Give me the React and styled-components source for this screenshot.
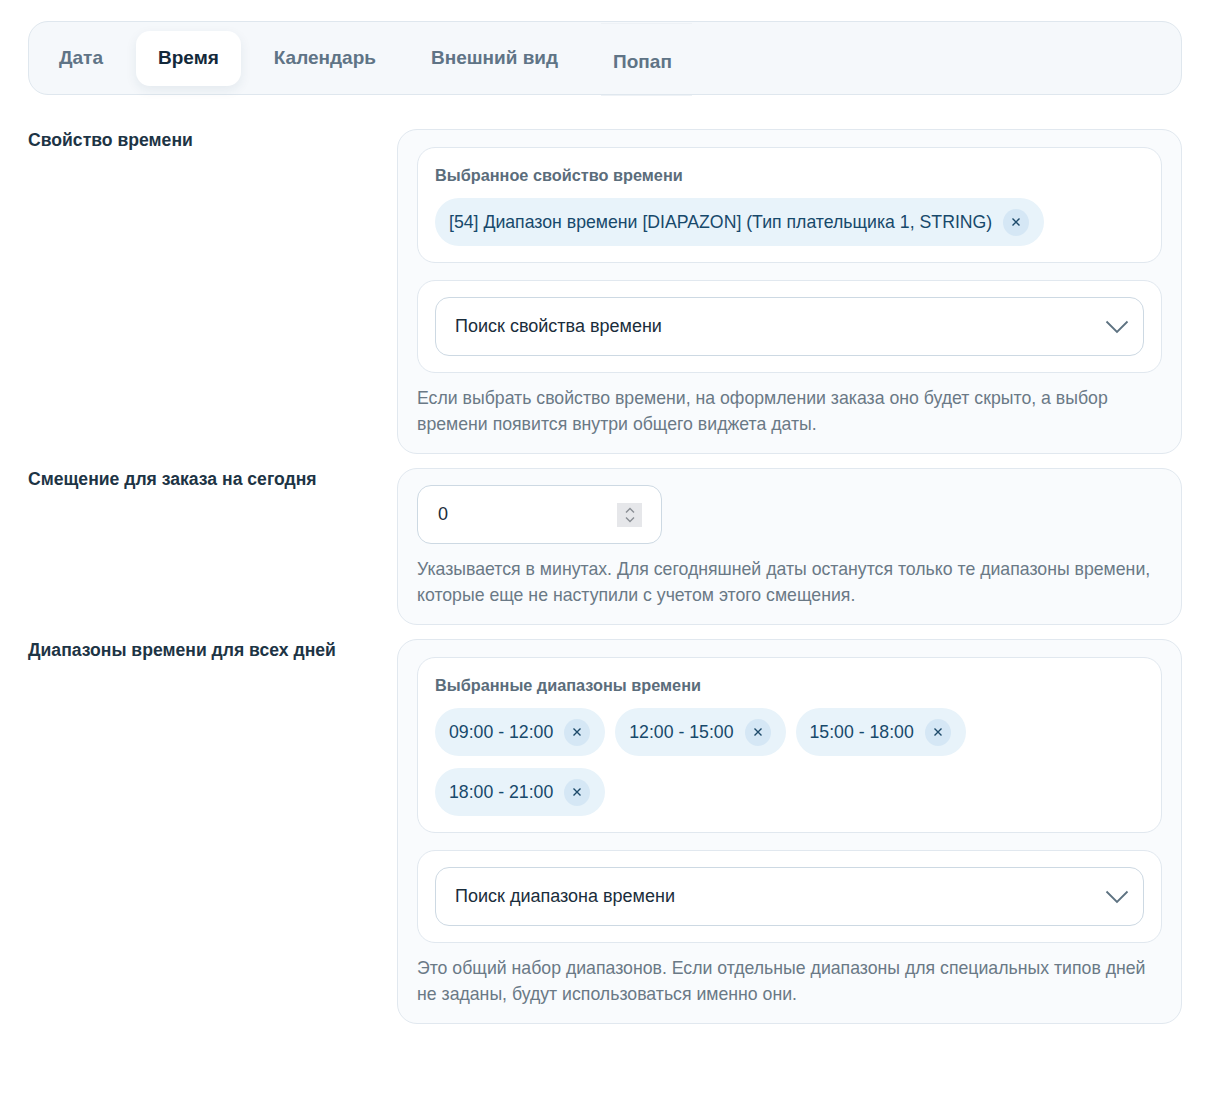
import styled, { createGlobalStyle } from "styled-components";

const GlobalStyle = createGlobalStyle`
  body {
    margin: 0;
    background: #fff;
    font-family: "Liberation Sans", Arial, sans-serif;
    color: #1e3546;
  }
`;

const Page = styled.div`
  padding: 21px 31px 40px 28px;
  display: flex;
  flex-direction: column;
  row-gap: 14px;
`;

const TabBar = styled.div`
  display: flex;
  align-items: center;
  column-gap: 11px;
  height: 72px;
  padding: 0 8px;
  border: 1px solid #dfe7ee;
  border-radius: 20px;
  background: #f5f8fb;
  margin-bottom: 20px;
`;

const Tab = styled.div`
  height: 55px;
  padding: 0 22px;
  display: flex;
  align-items: center;
  font-size: 19px;
  font-weight: bold;
  border-radius: 14px;
  color: ${(p) => (p.$active ? "#13293a" : "#5f7486")};
  background: ${(p) => (p.$active ? "#fff" : "transparent")};
  box-shadow: ${(p) => (p.$active ? "0 4px 12px rgba(30, 60, 90, 0.08)" : "none")};
`;

const OddTab = styled(Tab)`
  height: 73px;
  padding: 6px 20px 0 12px;
  margin-left: 10px;
  box-sizing: border-box;
  border-radius: 0;
  border-top: 1px solid #eef2f6;
  border-bottom: 1px solid #eef2f6;
  margin-top: 2px;
`;

const Row = styled.div`
  display: grid;
  grid-template-columns: 369px 1fr;
`;

const Label = styled.div`
  font-size: 17.6px;
  font-weight: bold;
  color: #1d3445;
  padding-top: 1px;
`;

const Section = styled.div`
  border: 1px solid #e1e8ef;
  border-radius: 20px;
  background: #f9fbfd;
  padding: ${(p) => (p.$compact ? "16px" : "17px")} 19px 16px 19px;
  display: flex;
  flex-direction: column;
  row-gap: 17px;
`;

const Inner = styled.div`
  border: 1px solid #e1e8ef;
  border-radius: 18px;
  background: #fff;
  padding: ${(p) => (p.$tight ? "16px 17px" : "18px 17px 16px")};
`;

const InnerTitle = styled.div`
  font-size: 16.3px;
  font-weight: bold;
  color: #5b6d7b;
  margin-bottom: 13px;
`;

const Chips = styled.div`
  display: flex;
  flex-wrap: wrap;
  gap: 12px 10px;
  margin-right: 2px;
`;

const Chip = styled.div`
  height: 48px;
  border-radius: 24px;
  background: #e8f3fa;
  color: #17496b;
  font-size: 17.7px;
  display: flex;
  align-items: center;
  padding: 0 15px 0 14px;
  column-gap: 11px;
`;

const ChipClose = styled.span`
  width: 26px;
  height: 27px;
  border-radius: 50%;
  background: #d5e7f5;
  display: flex;
  align-items: center;
  justify-content: center;
`;

const Select = styled.div`
  height: 57px;
  border: 1px solid #cdd9e3;
  border-radius: 14px;
  background: #fff;
  display: flex;
  align-items: center;
  justify-content: space-between;
  padding: 0 14px 0 19px;
  font-size: 18px;
  color: #1a2d3b;
`;

const NumberBox = styled.div`
  width: 245px;
  height: 59px;
  border: 1px solid #cdd9e3;
  border-radius: 14px;
  background: #fff;
  display: flex;
  align-items: center;
  justify-content: space-between;
  padding: 0 19px 0 20px;
  box-sizing: border-box;
  font-size: 18px;
  color: #1a2d3b;
`;

const Spinner = styled.span`
  width: 25px;
  height: 24px;
  background: #e6e7ea;
  display: flex;
  align-items: center;
  justify-content: center;
`;

const Help = styled.div`
  font-size: 17.7px;
  line-height: 26px;
  color: #6a7986;
  margin-top: -5px;
`;

const CloseIcon = () => (
  <svg width="10" height="10" viewBox="0 0 10 10">
    <path d="M1.5 1.5l7 7M8.5 1.5l-7 7" stroke="#1d4a6a" strokeWidth="1.4" />
  </svg>
);

const Chevron = () => (
  <svg width="24" height="14" viewBox="0 0 24 14">
    <path d="M1.5 1.5l10.5 10.5 10.5-10.5" fill="none" stroke="#5d7281" strokeWidth="1.8" />
  </svg>
);

const SpinIcon = () => (
  <svg width="12" height="18" viewBox="0 0 12 18">
    <path d="M2 6.5l4-4 4 4M2 11.5l4 4 4-4" fill="none" stroke="#8a8e94" strokeWidth="1.4" />
  </svg>
);

const ranges = ["09:00 - 12:00", "12:00 - 15:00", "15:00 - 18:00", "18:00 - 21:00"];

function App() {
  return (
    <>
      <GlobalStyle />
      <Page>
        <TabBar>
          <Tab>Дата</Tab>
          <Tab $active>Время</Tab>
          <Tab>Календарь</Tab>
          <Tab>Внешний вид</Tab>
          <OddTab>Попап</OddTab>
        </TabBar>

        <Row>
          <Label>Свойство времени</Label>
          <Section>
            <Inner>
              <InnerTitle>Выбранное свойство времени</InnerTitle>
              <Chips>
                <Chip>
                  [54] Диапазон времени [DIAPAZON] (Тип плательщика 1, STRING)
                  <ChipClose><CloseIcon /></ChipClose>
                </Chip>
              </Chips>
            </Inner>
            <Inner $tight>
              <Select>
                Поиск свойства времени
                <Chevron />
              </Select>
            </Inner>
            <Help>
              Если выбрать свойство времени, на оформлении заказа оно будет скрыто, а выбор
              <br />
              времени появится внутри общего виджета даты.
            </Help>
          </Section>
        </Row>

        <Row>
          <Label>Смещение для заказа на сегодня</Label>
          <Section $compact>
            <NumberBox>
              0
              <Spinner><SpinIcon /></Spinner>
            </NumberBox>
            <Help>
              Указывается в минутах. Для сегодняшней даты останутся только те диапазоны времени,
              <br />
              которые еще не наступили с учетом этого смещения.
            </Help>
          </Section>
        </Row>

        <Row>
          <Label>Диапазоны времени для всех дней</Label>
          <Section>
            <Inner>
              <InnerTitle>Выбранные диапазоны времени</InnerTitle>
              <Chips>
                {ranges.map((r) => (
                  <Chip key={r}>
                    {r}
                    <ChipClose><CloseIcon /></ChipClose>
                  </Chip>
                ))}
              </Chips>
            </Inner>
            <Inner $tight>
              <Select>
                Поиск диапазона времени
                <Chevron />
              </Select>
            </Inner>
            <Help>
              Это общий набор диапазонов. Если отдельные диапазоны для специальных типов дней
              <br />
              не заданы, будут использоваться именно они.
            </Help>
          </Section>
        </Row>
      </Page>
    </>
  );
}

export default App;
